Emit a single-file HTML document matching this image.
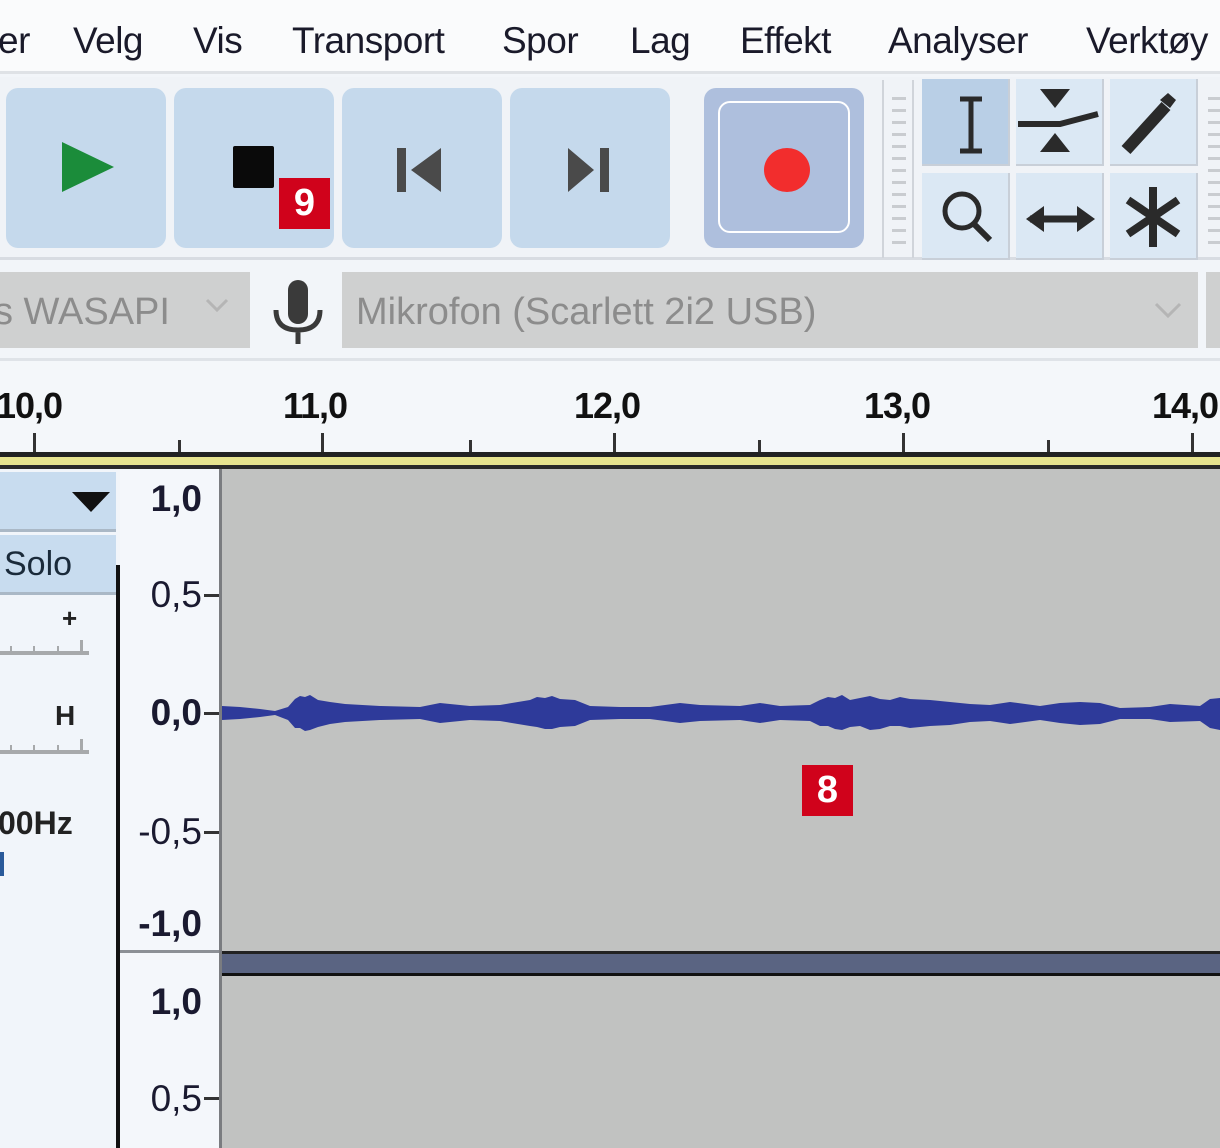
<!DOCTYPE html>
<html><head><meta charset="utf-8">
<style>
*{margin:0;padding:0;box-sizing:border-box}
body{width:1220px;height:1148px;overflow:hidden;background:#f2f5f9;position:relative;font-family:"Liberation Sans",sans-serif}
.a{position:absolute}
.menu{left:0;top:0;width:1220px;height:74px;background:#fafbfc;border-bottom:3px solid #dfe2e6}
.menu span{position:absolute;top:20px;font-size:37px;color:#1a1a2a;letter-spacing:-0.5px}
.btn{top:88px;width:160px;height:160px;background:#c5d9ec;border-radius:12px}
.tool{width:88px;height:87px;background:#dbe8f4;border-right:2px solid #c8cfd8;border-bottom:2px solid #c8cfd8}
.lbl{font-weight:bold;font-size:36px;color:#111;letter-spacing:-1px}
.sc{position:absolute;right:1018px;font-weight:bold;font-size:37px;color:#1a1a30;letter-spacing:0}
.sc.n{font-weight:normal}
.tk{position:absolute;left:204px;width:16px;height:3px;background:#333}
.badge{background:#d0021b;color:#fff;font-weight:bold;font-size:38px;text-align:center;line-height:51px;width:51px;height:51px}
</style></head><body>
<div class="a menu">
<span style="left:-2px">er</span><span style="left:73px">Velg</span><span style="left:193px">Vis</span><span style="left:292px">Transport</span><span style="left:502px">Spor</span><span style="left:630px">Lag</span><span style="left:740px">Effekt</span><span style="left:888px">Analyser</span><span style="left:1086px">Verktøy</span>
</div>
<div class="a" style="left:0;top:77px;width:1220px;height:183px;background:#f0f3f7;border-bottom:3px solid #d8dce2"></div>
<div class="a btn" style="left:6px"></div>
<div class="a btn" style="left:174px"></div>
<div class="a btn" style="left:342px"></div>
<div class="a btn" style="left:510px"></div>
<div class="a btn" style="left:704px;background:#aebfdd"></div>
<div class="a" style="left:718px;top:101px;width:132px;height:132px;border:2px solid #fff;border-radius:12px"></div>
<svg class="a" style="left:0;top:0" width="1220" height="260">
<polygon points="62,142 114,167 62,192" fill="#1b8c3a"/>
<rect x="233" y="146" width="41" height="42" fill="#0a0a0a" rx="2"/>
<rect x="397" y="148" width="9" height="44" fill="#4a4a4a"/>
<polygon points="441,148 411,170 441,192" fill="#4a4a4a"/>
<polygon points="568,148 594,170 568,192" fill="#4a4a4a"/>
<rect x="600" y="148" width="9" height="44" fill="#4a4a4a"/>
<ellipse cx="787" cy="170" rx="23" ry="22" fill="#f22d2d"/>
</svg>
<div class="a badge" style="left:279px;top:178px">9</div>
<div class="a" style="left:882px;top:80px;width:32px;height:178px;border-left:2px solid #d0d4da;border-right:2px solid #d0d4da;background:repeating-linear-gradient(#f0f3f7 0 9px,#c9ccd0 9px 12px) 8px 8px/14px 160px no-repeat"></div>
<div class="a tool" style="left:922px;top:79px;background:#b9cfe6"></div>
<div class="a tool" style="left:1016px;top:79px"></div>
<div class="a tool" style="left:1110px;top:79px"></div>
<div class="a tool" style="left:922px;top:173px"></div>
<div class="a tool" style="left:1016px;top:173px"></div>
<div class="a tool" style="left:1110px;top:173px"></div>
<div class="a" style="left:1204px;top:80px;width:16px;height:178px;background:repeating-linear-gradient(#f0f3f7 0 9px,#c9ccd0 9px 12px) 4px 8px/12px 160px no-repeat"></div>
<svg class="a" style="left:0;top:0" width="1220" height="260" fill="none" stroke="#2a2a2a">
<path d="M960 99h22M971 99v52M960 151h22" stroke-width="5"/>
<path d="M1018 124h42l38-10" stroke-width="6"/>
<polygon points="1040,89 1070,89 1055,108" fill="#2a2a2a" stroke="none"/>
<polygon points="1040,152 1070,152 1055,133" fill="#2a2a2a" stroke="none"/>
<path d="M1126 150l40-44" stroke-width="12"/>
<path d="M1160 100l8-7 8 7-6 8z" fill="#2a2a2a" stroke="none"/>
<circle cx="962" cy="211" r="17" stroke-width="5"/>
<path d="M974 224l16 16" stroke-width="6"/>
<path d="M1030 219h54" stroke-width="7"/>
<polygon points="1026,219 1044,206 1044,232" fill="#2a2a2a" stroke="none"/>
<polygon points="1095,219 1077,206 1077,232" fill="#2a2a2a" stroke="none"/>
<path d="M1153 187v60M1128 200l50 34M1128 234l50-34" stroke-width="8"/>
</svg>
<div class="a" style="left:0;top:272px;width:250px;height:76px;background:#cfd0d0"></div>
<div class="a" style="left:-6px;top:291px;font-size:38px;color:#8c8c8c">s WASAPI</div>
<svg class="a" style="left:0;top:260px" width="1220" height="100" fill="none">
<path d="M207 40l10 10 10-10" stroke="#b5b5b5" stroke-width="3"/>
<rect x="288" y="20" width="20" height="44" rx="10" fill="#3a3a3a"/>
<path d="M276 50q0 20 22 20q22 0 22-20M298 70v14" stroke="#3a3a3a" stroke-width="5"/>
</svg>
<div class="a" style="left:342px;top:272px;width:856px;height:76px;background:#cfd0d0"></div>
<svg class="a" style="left:1150px;top:290px" width="40" height="40" fill="none"><path d="M6 14l12 12 12-12" stroke="#b5b5b5" stroke-width="3"/></svg>
<div class="a" style="left:1206px;top:272px;width:20px;height:76px;background:#cfd0d0"></div>
<div class="a" style="left:356px;top:291px;font-size:38px;color:#8c8c8c">Mikrofon (Scarlett 2i2 USB)</div>
<div class="a" style="left:0;top:358px;width:1220px;height:94px;background:#f4f7fa;border-top:3px solid #dfe3e8"></div>
<div class="a lbl" style="left:-4px;top:385px">10,0</div>
<div class="a lbl" style="left:283px;top:385px">11,0</div>
<div class="a lbl" style="left:574px;top:385px">12,0</div>
<div class="a lbl" style="left:864px;top:385px">13,0</div>
<div class="a lbl" style="left:1152px;top:385px">14,0</div>
<svg class="a" style="left:0;top:425px" width="1220" height="50">
<g fill="#333"><rect x="33" y="8" width="3" height="19"/><rect x="178" y="15" width="3" height="12"/><rect x="321" y="8" width="3" height="19"/><rect x="469" y="15" width="3" height="12"/><rect x="613" y="8" width="3" height="19"/><rect x="758" y="15" width="3" height="12"/><rect x="902" y="8" width="3" height="19"/><rect x="1047" y="15" width="3" height="12"/><rect x="1191" y="8" width="3" height="19"/></g>
<rect x="0" y="27" width="1220" height="5" fill="#222"/>
<rect x="0" y="32" width="1220" height="8" fill="#e7e48f"/>
<rect x="0" y="40" width="1220" height="4" fill="#2a2a2a"/>
</svg>
<div class="a" style="left:0;top:469px;width:118px;height:679px;background:#f1f5fa"></div>
<div class="a" style="left:0;top:472px;width:116px;height:60px;background:#c8dcef;border-bottom:3px solid #aab8c6"></div>
<svg class="a" style="left:70px;top:490px" width="44" height="26"><polygon points="2,2 40,2 21,22" fill="#111"/></svg>
<div class="a" style="left:0;top:535px;width:116px;height:60px;background:#c8dcef;border-bottom:3px solid #aab8c6"></div>
<div class="a" style="left:4px;top:545px;font-size:34px;color:#1a2a3a">Solo</div>
<div class="a" style="left:62px;top:603px;font-size:26px;font-weight:bold;color:#222">+</div>
<div class="a" style="left:0;top:651px;width:89px;height:4px;background:#a7a9ab"></div>
<div class="a" style="left:0;top:750px;width:89px;height:4px;background:#a7a9ab"></div>
<svg class="a" style="left:0;top:630px" width="100" height="130" fill="#a7a9ab"><rect x="10" y="16" width="2" height="6"/><rect x="33" y="16" width="2" height="6"/><rect x="57" y="16" width="2" height="6"/><rect x="80" y="10" width="3" height="12"/><rect x="10" y="115" width="2" height="6"/><rect x="33" y="115" width="2" height="6"/><rect x="57" y="115" width="2" height="6"/><rect x="80" y="109" width="3" height="12"/></svg>
<div class="a" style="left:55px;top:700px;font-size:28px;font-weight:bold;color:#222">H</div>
<div class="a" style="left:-2px;top:805px;font-size:32px;font-weight:bold;color:#222">00Hz</div>
<div class="a" style="left:0;top:852px;width:4px;height:24px;background:#2a5a9a"></div>
<div class="a" style="left:116px;top:565px;width:4px;height:583px;background:#111"></div>
<div class="a" style="left:120px;top:469px;width:100px;height:679px;background:#f4f7fb"></div>
<div class="a" style="left:120px;top:950px;width:100px;height:3px;background:#8c9096"></div>
<div class="sc" style="top:478px">1,0</div>
<div class="sc n" style="top:574px">0,5</div><div class="tk" style="top:594px"></div>
<div class="sc" style="top:692px">0,0</div><div class="tk" style="top:712px"></div>
<div class="sc n" style="top:811px">-0,5</div><div class="tk" style="top:831px"></div>
<div class="sc" style="top:903px">-1,0</div>
<div class="sc" style="top:981px">1,0</div>
<div class="sc n" style="top:1078px">0,5</div><div class="tk" style="top:1097px"></div>
<div class="a" style="left:219px;top:469px;width:3px;height:679px;background:#7a7c80"></div>
<div class="a" style="left:222px;top:469px;width:998px;height:482px;background:#c1c2c1"></div>
<div class="a" style="left:222px;top:951px;width:998px;height:25px;background:#5a6482;border-top:3px solid #222;border-bottom:3px solid #111"></div>
<div class="a" style="left:222px;top:976px;width:998px;height:172px;background:#c1c2c1"></div>
<svg class="a" style="left:0;top:0" width="1220" height="1148">
<polygon fill="#2e3a9a" points="222,706 240,707 260,709 275,711 288,707 295,699 300,696 305,697 310,695 318,700 330,702 345,704 380,706 420,707 440,703 470,706 500,705 530,700 537,697 545,698 552,696 560,699 575,700 590,706 620,707 650,707 680,703 700,705 740,706 760,703 780,706 810,705 820,700 828,697 835,698 842,695 850,700 860,698 870,696 880,699 890,700 900,697 910,699 930,700 950,702 970,704 990,705 1010,702 1040,706 1060,703 1080,702 1100,703 1120,708 1150,707 1170,704 1200,706 1210,699 1220,698 1220,730 1210,728 1200,721 1170,722 1150,719 1120,719 1100,724 1080,725 1060,723 1040,720 1010,724 990,721 970,722 950,725 930,726 910,728 900,726 890,726 880,729 870,730 860,726 850,727 842,730 835,729 828,726 820,726 810,721 780,720 760,723 740,720 700,721 680,723 650,719 620,719 590,720 575,726 560,727 552,729 545,729 537,727 530,726 500,721 470,720 440,723 420,719 380,720 345,722 330,724 318,727 310,730 305,731 300,728 295,728 288,720 275,715 260,717 240,719 222,720"/>
</svg>
<div class="a badge" style="left:802px;top:765px">8</div>
</body></html>
